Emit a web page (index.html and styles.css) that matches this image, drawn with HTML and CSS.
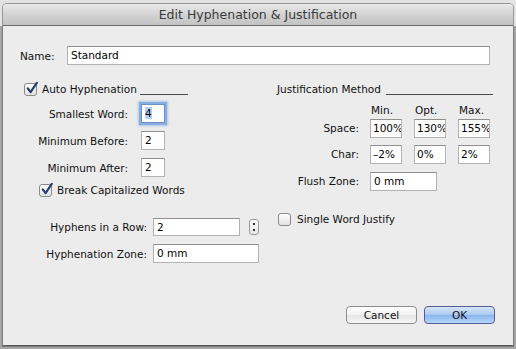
FILE: index.html
```html
<!DOCTYPE html>
<html>
<head>
<meta charset="utf-8">
<link rel="stylesheet" href="styles.css">
</head>
<body>
<div class="desk">
  <div class="dialog">
    <div class="titlebar">Edit Hyphenation &amp; Justification</div>
    <div class="content">
      <div class="name-row">
        <span class="name-label">Name:</span>
        <div class="field name-field">Standard</div>
      </div>
      <div class="columns">
        <div class="col-left">
          <div class="group-head">
            <span class="check on"><svg viewBox="0 0 13 13" width="13" height="13"><path d="M2.8 6.3 L5.6 10.2 L11.8 0.8" fill="none" stroke="#2a3f6f" stroke-width="2.2" stroke-linecap="round" stroke-linejoin="round"/></svg></span>
            <span class="head-text">Auto Hyphenation</span>
            <span class="head-line"></span>
          </div>
          <div class="frow first">
            <span class="flabel">Smallest Word:</span>
            <div class="field small focus"><span class="sel">4</span></div>
          </div>
          <div class="frow">
            <span class="flabel">Minimum Before:</span>
            <div class="field small">2</div>
          </div>
          <div class="frow">
            <span class="flabel">Minimum After:</span>
            <div class="field small">2</div>
          </div>
          <div class="check-row break">
            <span class="check on"><svg viewBox="0 0 13 13" width="13" height="13"><path d="M2.8 6.3 L5.6 10.2 L11.8 0.8" fill="none" stroke="#2a3f6f" stroke-width="2.2" stroke-linecap="round" stroke-linejoin="round"/></svg></span>
            <span class="head-text">Break Capitalized Words</span>
          </div>
          <div class="frow wide hyph-row">
            <span class="flabel">Hyphens in a Row:</span>
            <div class="field hyph">2</div>
            <span class="stepper"><i></i><i></i></span>
          </div>
          <div class="frow wide">
            <span class="flabel">Hyphenation Zone:</span>
            <div class="field zone">0 mm</div>
          </div>
        </div>
        <div class="col-right">
          <div class="group-head">
            <span class="head-text">Justification Method</span>
            <span class="head-line"></span>
          </div>
          <div class="jgrid">
            <span></span>
            <span class="colhead">Min.</span>
            <span class="colhead">Opt.</span>
            <span class="colhead">Max.</span>
            <span class="jlabel">Space:</span>
            <div class="field jf">100%</div>
            <div class="field jf">130%</div>
            <div class="field jf">155%</div>
            <span class="jlabel">Char:</span>
            <div class="field jf">–2%</div>
            <div class="field jf">0%</div>
            <div class="field jf">2%</div>
            <span class="jlabel flush">Flush Zone:</span>
            <div class="field flushf">0 mm</div>
          </div>
          <div class="check-row single">
            <span class="check"></span>
            <span class="head-text">Single Word Justify</span>
          </div>
        </div>
      </div>
    </div>
    <div class="buttons">
      <span class="btn">Cancel</span>
      <span class="btn ok">OK</span>
    </div>
  </div>
</div>
</body>
</html>
```
FILE: styles.css
```css
html, body {
  margin: 0;
  padding: 0;
}
body {
  width: 516px;
  height: 349px;
  overflow: hidden;
  background: linear-gradient(#e3e3e3 0, #e3e3e3 26px, #a5a5a5 26px, #a5a5a5 100%);
  font-family: "DejaVu Sans", "Liberation Sans", sans-serif;
  font-size: 10.5px;
  color: #111;
}
.desk {
  padding: 4px 3px 0 3px;
  height: 349px;
  box-sizing: border-box;
}
.dialog {
  width: 510px;
  height: 342px;
  background: #ececec;
  border-radius: 4px 4px 0 0;
  display: flex;
  flex-direction: column;
  box-shadow: 0 0 0 1px rgba(90, 90, 90, 0.55);
  border-bottom: 1px solid #5a5a5a;
  box-sizing: border-box;
}
.titlebar {
  height: 21px;
  border-bottom: 1px solid #6a6a6a;
  background: linear-gradient(#e9e9e9, #cfcfcf 60%, #c3c3c3);
  border-radius: 4px 4px 0 0;
  text-align: center;
  font-size: 12.5px;
  line-height: 22px;
  color: #3a3a3a;
  flex: none;
}
.content {
  padding: 20px 20px 0 17px;
  flex: 1;
}
.name-row {
  display: flex;
  align-items: center;
  height: 19px;
}
.name-label {
  width: 47px;
}
.field {
  box-sizing: border-box;
  background: #fff;
  border: 1px solid #b2b2b2;
  border-top-color: #8f8f8f;
  height: 19px;
  line-height: 17px;
  padding-left: 3px;
  color: #000;
  white-space: nowrap;
  overflow: hidden;
}
.name-field {
  width: 423px;
}
.columns {
  display: flex;
  margin-top: 17px;
}
.col-left {
  width: 257px;
  flex: none;
}
.col-right {
  flex: 1;
}
.group-head, .check-row {
  display: flex;
  align-items: center;
  height: 14px;
}
.col-left > .group-head {
  width: 168px;
}
.check {
  width: 13px;
  height: 13px;
  box-sizing: border-box;
  border: 1px solid #8a8a8a;
  border-radius: 3px;
  background: linear-gradient(#ffffff, #e2e2e2);
  position: relative;
  flex: none;
}
.check svg {
  position: absolute;
  left: 0;
  top: -2px;
}
.col-left > .group-head .check {
  margin-left: 4px;
  margin-right: 5px;
}
.head-line {
  flex: 1;
  align-self: flex-end;
  border-bottom: 1px solid #4a4a4a;
  margin-bottom: 1px;
  margin-left: 3px;
}
.col-right .head-line {
  margin-left: 5px;
}
.frow {
  display: flex;
  align-items: center;
  margin-top: 8px;
}
.flabel {
  width: 108px;
  text-align: right;
  margin-right: 13px;
  flex: none;
}
.field.small {
  width: 24px;
}
.field.focus {
  box-shadow: 0 0 0 2px #84aee4, 0 0 2px 3px rgba(120, 160, 220, 0.5);
  border-color: #6f8fbf;
}
.sel {
  background: #b5d1f4;
}
.check-row.break {
  margin-top: 6px;
}
.check-row.break .check {
  margin-left: 19px;
  margin-right: 5px;
}
.frow.wide .flabel {
  width: 127px;
  margin-right: 6px;
}
.hyph-row {
  margin-top: 21px;
}
.field.hyph {
  width: 87px;
  height: 18px;
}
.stepper {
  width: 10px;
  height: 16px;
  box-sizing: border-box;
  border: 1px solid #9a9a9a;
  border-radius: 3px;
  background: linear-gradient(#fdfdfd, #e6e6e6);
  margin-left: 9px;
  display: flex;
  flex-direction: column;
  align-items: center;
  justify-content: center;
  gap: 4px;
}
.stepper i {
  width: 2px;
  height: 2px;
  background: #333;
  display: block;
}
.field.zone {
  width: 106px;
}
.jgrid {
  display: grid;
  grid-template-columns: 81px 32px 32px 32px;
  column-gap: 12px;
  margin-top: 8px;
}
.colhead {
  padding-left: 1px;
  height: 13px;
  line-height: 13px;
  margin-bottom: 2px;
}
.jlabel {
  text-align: right;
  line-height: 19px;
  margin-right: -1px;
  margin-bottom: 7px;
}
.jgrid .field {
  margin-bottom: 7px;
}
.field.jf {
  width: 32px;
  padding-left: 2px;
}
.jlabel.flush {
  margin-top: 1px;
}
.field.flushf {
  grid-column: span 2;
  width: 67px;
  margin-top: 1px;
}
.check-row.single {
  margin-top: 14px;
}
.check-row.single .check {
  margin-left: 1px;
  margin-right: 6px;
}
.buttons {
  display: flex;
  justify-content: flex-end;
  gap: 7px;
  padding: 0 18px 21px 0;
}
.btn {
  width: 71px;
  height: 18px;
  box-sizing: border-box;
  border: 1px solid #8c8c8c;
  border-radius: 4px;
  background: linear-gradient(#ffffff, #f1f1f1 50%, #e4e4e4 51%, #f6f6f6);
  text-align: center;
  line-height: 16px;
  color: #111;
}
.btn.ok {
  border-color: #565c96;
  background: linear-gradient(#d6e6fa, #a9c9f1 50%, #88b5ee 51%, #b6d6fb);
}
```
